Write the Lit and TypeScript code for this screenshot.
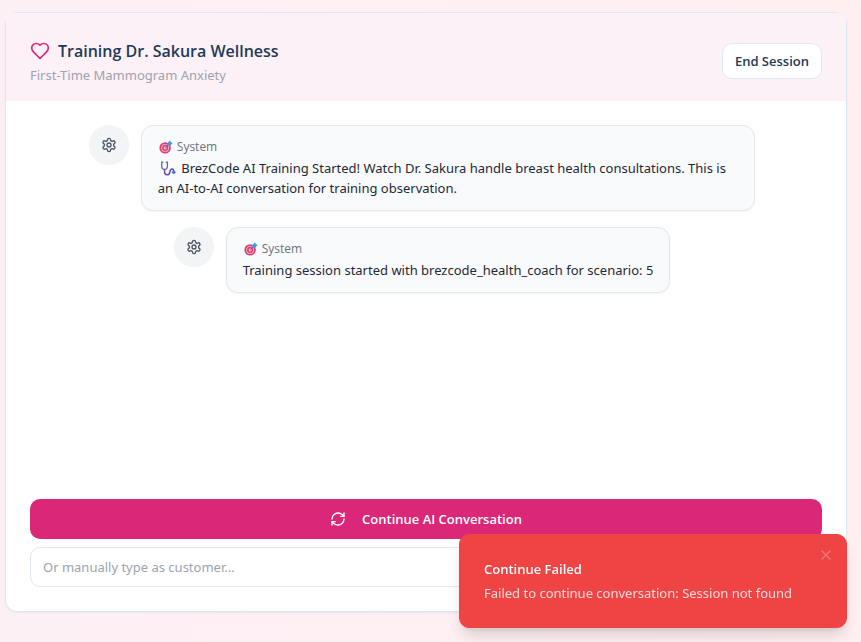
import { LitElement, html, css, svg } from "lit";
import { customElement, state } from "lit/decorators.js";

interface Message {
  text: string;
  stethoscope: boolean;
}

const stroke = (paths: unknown, cls: string) => html`
  <svg class=${cls} viewBox="0 0 24 24" fill="none" stroke="currentColor" stroke-width="2"
    stroke-linecap="round" stroke-linejoin="round" aria-hidden="true">${paths}</svg>`;

const heart = svg`<path d="M19 14c1.49-1.46 3-3.21 3-5.5A5.5 5.5 0 0 0 16.5 3c-1.76 0-3 .5-4.5 2-1.5-1.5-2.74-2-4.5-2A5.5 5.5 0 0 0 2 8.5c0 2.3 1.5 4.05 3 5.5l7 7Z"/>`;
const gear = svg`<path d="M12.22 2h-.44a2 2 0 0 0-2 2v.18a2 2 0 0 1-1 1.73l-.43.25a2 2 0 0 1-2 0l-.15-.08a2 2 0 0 0-2.73.73l-.22.38a2 2 0 0 0 .73 2.73l.15.1a2 2 0 0 1 1 1.72v.51a2 2 0 0 1-1 1.74l-.15.09a2 2 0 0 0-.73 2.73l.22.38a2 2 0 0 0 2.73.73l.15-.08a2 2 0 0 1 2 0l.43.25a2 2 0 0 1 1 1.73V20a2 2 0 0 0 2 2h.44a2 2 0 0 0 2-2v-.18a2 2 0 0 1 1-1.73l.43-.25a2 2 0 0 1 2 0l.15.08a2 2 0 0 0 2.73-.73l.22-.39a2 2 0 0 0-.73-2.73l-.15-.08a2 2 0 0 1-1-1.74v-.5a2 2 0 0 1 1-1.74l.15-.09a2 2 0 0 0 .73-2.73l-.22-.38a2 2 0 0 0-2.73-.73l-.15.08a2 2 0 0 1-2 0l-.43-.25a2 2 0 0 1-1-1.73V4a2 2 0 0 0-2-2z"/><circle cx="12" cy="12" r="3"/>`;
const refresh = svg`<path d="M3 12a9 9 0 0 1 9-9 9.75 9.75 0 0 1 6.74 2.74L21 8"/><path d="M21 3v5h-5"/><path d="M21 12a9 9 0 0 1-9 9 9.75 9.75 0 0 1-6.74-2.74L3 16"/><path d="M8 16H3v5"/>`;
const cross = svg`<path d="M18 6 6 18"/><path d="m6 6 12 12"/>`;

const targetIcon = html`
  <svg class="target" viewBox="0 0 24 24" aria-hidden="true">
    <circle cx="10.500" cy="13.500" r="9.800" fill="#dc3f70"/>
    <circle cx="10.500" cy="13.500" r="6.800" fill="#f0b5ca"/>
    <circle cx="10.500" cy="13.500" r="5.200" fill="#dc3f70"/>
    <circle cx="10.500" cy="13.500" r="2.600" fill="#f3b8cb"/>
    <path d="M11 13 18 6" stroke="#54607c" stroke-width="1.600"/>
    <path d="M14 5.500 19 .5l1 3L23.500 5 19 10l-5-.5z" fill="#3a9fe6"/>
  </svg>`;

const stethoscopeIcon = html`
  <svg class="stethoscope" viewBox="0 0 28 26" fill="none" stroke-linecap="round" aria-hidden="true">
    <path d="M5 2H3v6c0 4 2 6.500 5 6.500S13 12 13 8V2h-2" stroke="#5a64a4" stroke-width="2.200"/>
    <path d="M8 15v4c0 6 8 6.500 9 1 .6-3.500 1-6 4-6 2.500 0 3 2 3 4" stroke="#7048b0" stroke-width="2.600"/>
    <circle cx="24" cy="19.500" r="3.200" fill="#2f86f0"/>
  </svg>`;

@customElement("app-root")
export class AppRoot extends LitElement {
  @state() private toastOpen = true;

  private messages: Message[] = [
    {
      text: "BrezCode AI Training Started! Watch Dr. Sakura handle breast health consultations. This is an AI-to-AI conversation for training observation.",
      stethoscope: true,
    },
    {
      text: "Training session started with brezcode_health_coach for scenario: 5",
      stethoscope: false,
    },
  ];

  static styles = css`
    :host {
      display: block;
      box-sizing: border-box;
      min-height: 100vh;
      padding: 12px 14px 30px 5px;
      background: linear-gradient(90deg, #fdf0f4, #ffeff1);
      color: #1f2937;
      font: 13px/20px "Noto Sans", "Open Sans", sans-serif;
    }
    * { box-sizing: border-box; }
    h1, h2, p { margin: 0; }
    button, input { font: inherit; }
    button { cursor: pointer; }
    .card {
      display: flex;
      flex-direction: column;
      min-height: 600px;
      background: #fff;
      border: 1px solid #dce7f0;
      border-radius: 12px;
      box-shadow: 0 1px 2px rgba(0, 0, 0, 0.05);
    }
    .header {
      display: flex;
      align-items: center;
      justify-content: space-between;
      padding: 24px 24px 16px;
      background: #fcf1f7;
    }
    .title, .outline, .primary, .toast-title {
      font-family: "Open Sans", "Noto Sans", sans-serif;
      font-weight: 600;
    }
    .title {
      display: flex;
      align-items: center;
      gap: 8px;
      color: #1e3a56;
      font-size: 16px;
      line-height: 28px;
    }
    .heart { width: 20px; height: 20px; color: #db2777; }
    .subtitle { color: #9ca3af; }
    .outline {
      height: 36px;
      padding: 0 12px;
      background: #fff;
      border: 1px solid #e2e8f0;
      border-radius: 10px;
      color: #1e3a56;
    }
    .content {
      flex: 1;
      display: flex;
      flex-direction: column;
      padding: 24px;
    }
    .messages {
      flex: 1;
      display: flex;
      flex-direction: column;
      align-items: center;
      gap: 16px;
      padding-right: 8px;
    }
    .message { display: flex; gap: 12px; max-width: 85%; }
    .avatar {
      flex: none;
      display: grid;
      place-items: center;
      width: 40px;
      height: 40px;
      border-radius: 50%;
      background: #f3f4f6;
      color: #4b5563;
    }
    .gear { width: 16px; height: 16px; }
    .bubble {
      padding: 12px 16px;
      background: #f9fafb;
      border: 1px solid #e5e7eb;
      border-radius: 12px;
      box-shadow: 0 1px 2px rgba(0, 0, 0, 0.05);
    }
    .sender {
      display: flex;
      align-items: center;
      gap: 4px;
      height: 20px;
      padding-bottom: 2px;
      color: #6b7280;
      font: 500 12px/16px "Open Sans", "Noto Sans", sans-serif;
    }
    .target { width: 14px; height: 14px; margin: 0 0 0 1px; }
    .stethoscope { width: 16px; height: 15px; margin: 0 2px; vertical-align: -3px; }
    .actions { display: flex; flex-direction: column; gap: 8px; }
    .primary {
      display: flex;
      align-items: center;
      justify-content: center;
      gap: 16px;
      height: 40px;
      border: 0;
      border-radius: 10px;
      background: #db2777;
      color: #fff;
    }
    .refresh { width: 16px; height: 16px; }
    .field {
      width: 100%;
      height: 40px;
      padding: 0 12px;
      border: 1px solid #e2e8f0;
      border-radius: 10px;
      background: #fff;
      color: inherit;
    }
    .field::placeholder { color: #9ca3af; opacity: 1; }
    .toast {
      position: fixed;
      right: 14px;
      bottom: 14px;
      width: 388px;
      max-width: calc(100% - 28px);
      padding: 24px;
      border: 1px solid #ef4444;
      border-radius: 10px;
      background: #ef4444;
      color: #f8fafc;
      box-shadow: 0 10px 15px -3px rgba(0, 0, 0, 0.14), 0 4px 6px -4px rgba(0, 0, 0, 0.12);
    }
    .toast-title { margin-bottom: 4px; font-size: 13px; line-height: 20px; }
    .toast-text { color: #fbd9da; }
    .close {
      position: absolute;
      top: 8px;
      right: 8px;
      display: grid;
      padding: 4px;
      border: 0;
      background: none;
      color: #f37475;
    }
    .cross { width: 16px; height: 16px; }
  `;

  render() {
    return html`
      <main class="card">
        <header class="header">
          <div>
            <h1 class="title">${stroke(heart, "heart")}Training Dr. Sakura Wellness</h1>
            <p class="subtitle">First-Time Mammogram Anxiety</p>
          </div>
          <button class="outline" type="button">End Session</button>
        </header>
        <section class="content">
          <div class="messages">
            ${this.messages.map((m) => html`
              <article class="message">
                <div class="avatar">${stroke(gear, "gear")}</div>
                <div class="bubble">
                  <div class="sender">${targetIcon}<span>System</span></div>
                  <p>${m.stethoscope ? stethoscopeIcon : ""} ${m.text}</p>
                </div>
              </article>`)}
          </div>
          <div class="actions">
            <button class="primary" type="button">${stroke(refresh, "refresh")}Continue AI Conversation</button>
            <input class="field" type="text" aria-label="Message as customer" placeholder="Or manually type as customer..." />
          </div>
        </section>
      </main>
      ${this.toastOpen ? html`
        <aside class="toast" role="status">
          <h2 class="toast-title">Continue Failed</h2>
          <p class="toast-text">Failed to continue conversation: Session not found</p>
          <button class="close" type="button" aria-label="Close" @click=${() => (this.toastOpen = false)}>${stroke(cross, "cross")}</button>
        </aside>` : ""}
    `;
  }
}
